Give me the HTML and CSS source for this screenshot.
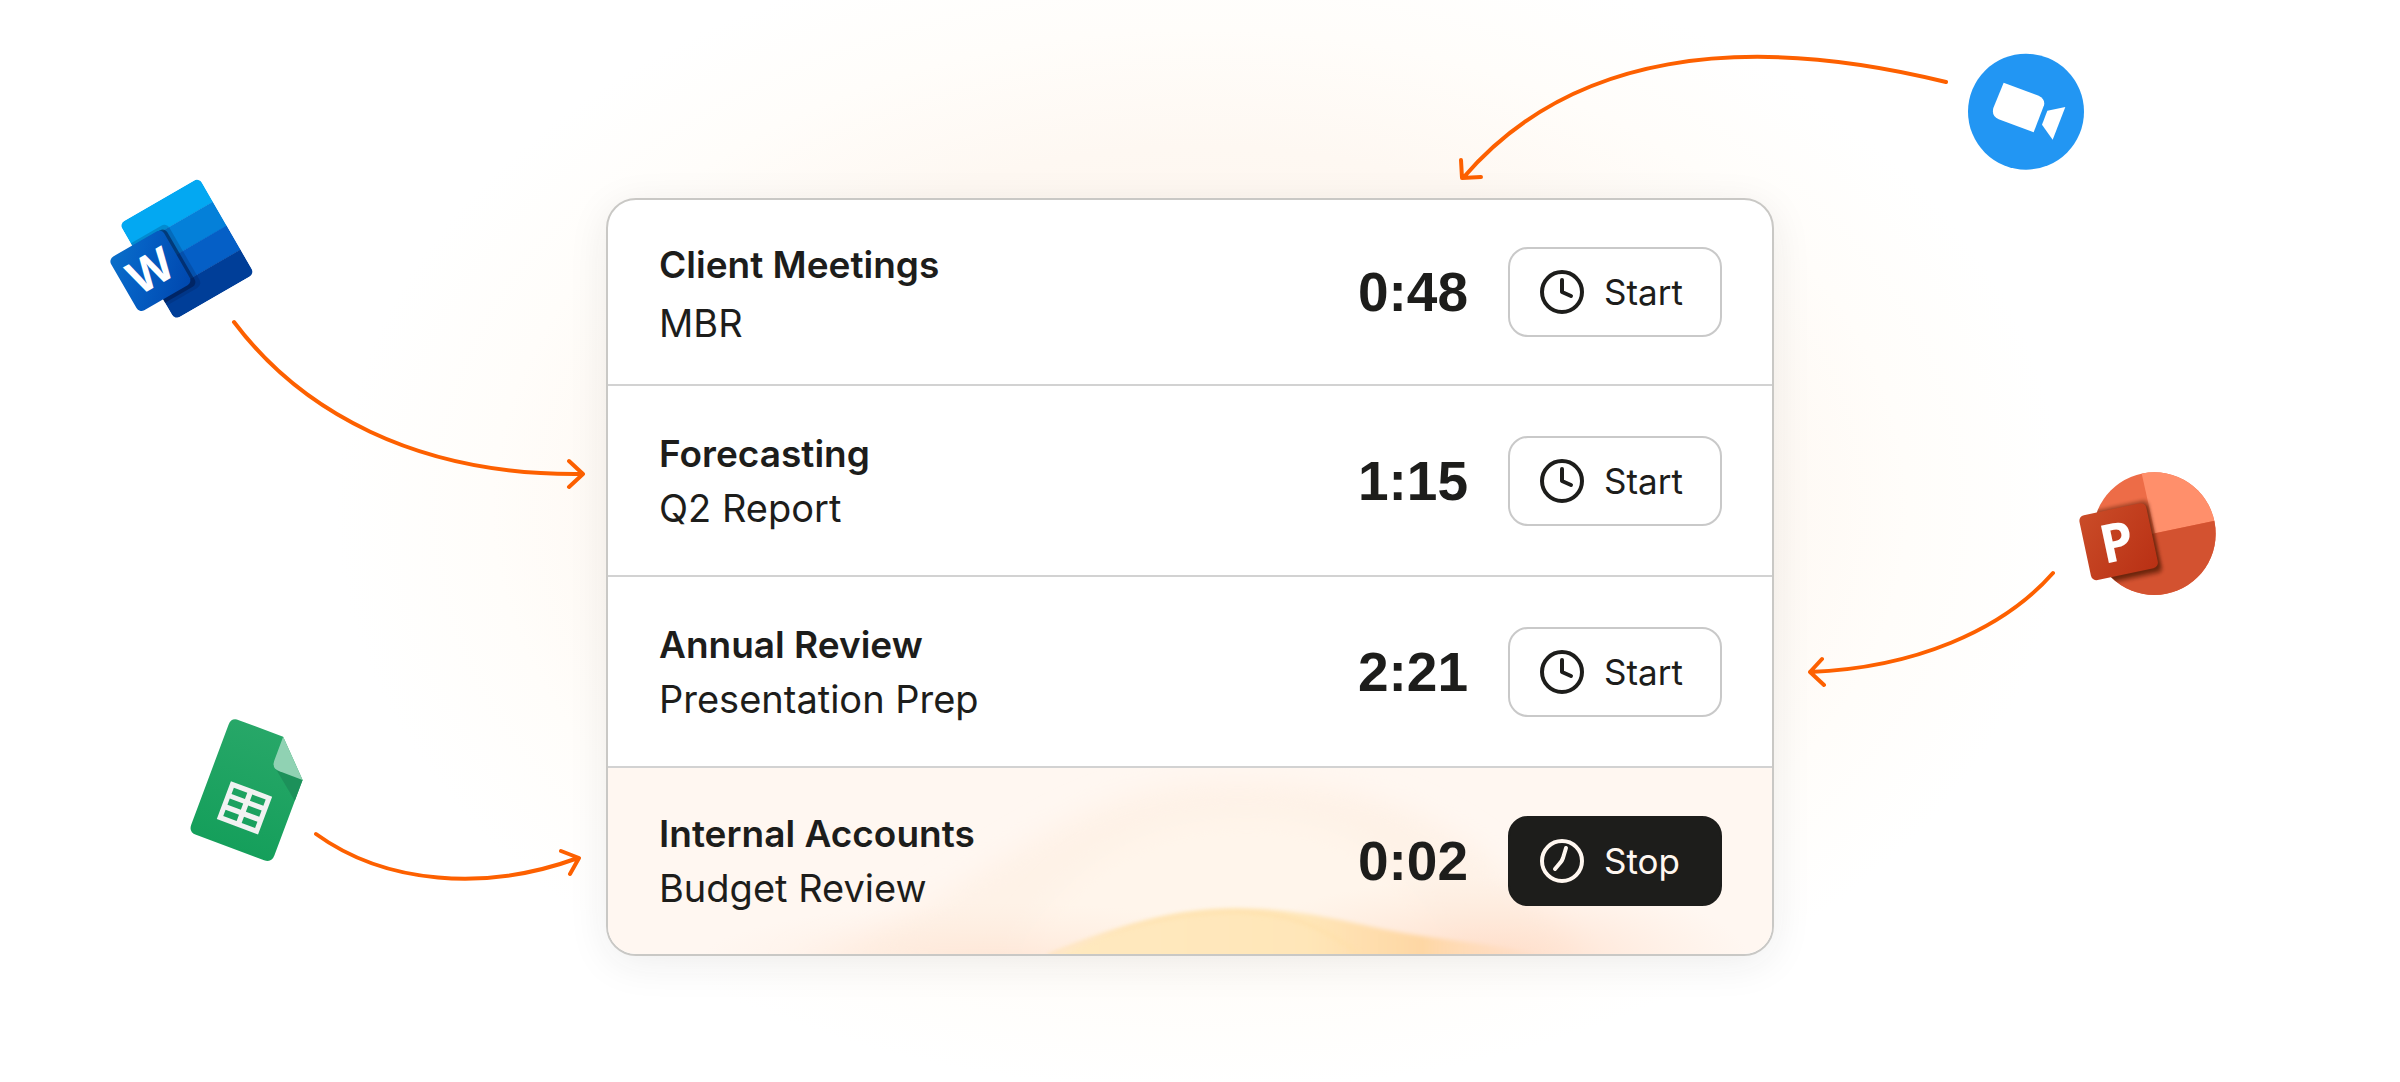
FILE: index.html
```html
<!DOCTYPE html>
<html lang="en">
<head>
<meta charset="utf-8">
<meta name="viewport" content="width=device-width, initial-scale=1">
<title>Time tracking</title>
<link rel="stylesheet" href="styles.css">
</head>
<body>
<main class="stage">
  <svg class="stage__art" viewBox="0 0 2400 1082" preserveAspectRatio="xMidYMin meet" aria-hidden="true">
    <defs>
      <linearGradient id="word-tile" x1="0" y1="0" x2="1" y2="1">
        <stop offset="0" stop-color="#0a6fc8"/><stop offset=".35" stop-color="#0560c4"/><stop offset="1" stop-color="#0047ae"/>
      </linearGradient>
      <linearGradient id="sheet-fill" x1="0" y1="0" x2="0" y2="1">
        <stop offset="0" stop-color="#27a768"/><stop offset="1" stop-color="#159f5b"/>
      </linearGradient>
      <linearGradient id="slide-tile" x1="0" y1="0" x2="1" y2="1">
        <stop offset="0" stop-color="#ca4c28"/><stop offset="1" stop-color="#b93014"/>
      </linearGradient>
      <clipPath id="word-clip"><rect width="276" height="333" rx="18"/></clipPath>
      <clipPath id="slide-clip"><circle cx="283" cy="221" r="184"/></clipPath>
      <filter id="soft" x="-20%" y="-20%" width="140%" height="140%"><feGaussianBlur stdDeviation="5"/></filter>
    </defs>

    <!-- word processor -->
    <svg x="90" y="160" width="200" height="180" viewBox="0 0 600 540">
      <g transform="translate(88 191) rotate(-30)">
        <g clip-path="url(#word-clip)">
          <rect width="276" height="84" fill="#03a8f2"/>
          <rect y="83" width="276" height="84" fill="#0480d9"/>
          <rect y="166" width="276" height="84" fill="#055fc6"/>
          <rect y="249" width="276" height="84" fill="#003e98"/>
          <rect x="-80" y="68" width="204" height="216" rx="18" fill="#00184a" opacity=".2"/>
          <rect x="-80" y="78" width="192" height="196" rx="16" fill="#001a4e" opacity=".6"/>
        </g>
        <rect x="-82" y="76" width="184" height="186" rx="17" fill="url(#word-tile)"/>
        <text class="glyph" x="10" y="218" font-size="138" text-anchor="middle">W</text>
      </g>
    </svg>

    <!-- spreadsheet -->
    <svg x="170" y="700" width="160" height="180" viewBox="0 0 480 540">
      <g transform="translate(184 52) rotate(20.5)">
        <path d="M24 0H166L266 101V343Q266 367 242 367H24Q0 367 0 343V24Q0 0 24 0Z" fill="url(#sheet-fill)"/>
        <path d="M174 94L266 101V168Z" fill="#1c915a"/>
        <path d="M166 0L266 101H192Q166 101 166 75Z" fill="#90d2b3"/>
        <path fill-rule="evenodd" fill="#f1f2f2" d="M66 180H198V301H66ZM81 195V215H124V195ZM140 195V215H183V195ZM81 230V250H124V230ZM140 230V250H183V230ZM81 266V286H124V266ZM140 266V286H183V266Z"/>
      </g>
    </svg>

    <!-- video call -->
    <svg x="1940" y="40" width="170" height="150" viewBox="0 0 510 450">
      <circle cx="258" cy="215" r="174" fill="#2296f3"/>
      <path d="M191 128L296 167Q316 176 312 196L281 277L176 238Q154 229 160 204Z" fill="#fff"/>
      <path d="M322 212L376 201L338 299L306 254Z" fill="#fff"/>
    </svg>

    <!-- presentation -->
    <svg x="2060" y="460" width="180" height="150" viewBox="0 0 540 450">
      <g clip-path="url(#slide-clip)">
        <rect width="540" height="450" fill="#ed6c47"/>
        <path d="M285 220L236 0H540V166Z" fill="#ff8f6b"/>
        <path d="M285 220L540 166V450H0V280Z" fill="#d35230"/>
        <g transform="translate(55 169) rotate(-12)" fill="#4a1405">
          <rect x="0" y="-8" width="216" height="228" rx="18" opacity=".32" filter="url(#soft)"/>
          <rect x="0" y="4" width="210" height="206" rx="16" opacity=".6" filter="url(#soft)"/>
        </g>
      </g>
      <g transform="translate(55 169) rotate(-12)">
        <rect width="205" height="199" rx="17" fill="url(#slide-tile)"/>
        <text class="glyph" x="46" y="156" font-size="160">P</text>
      </g>
    </svg>

    <g class="arrow">
      <path d="M234 322C300 410 415 476 582 474M569 461L583 474L569 487"/>
      <path d="M316 834C385 884 485 892 578 858M561 851L579 858L570 874"/>
      <path d="M1946 82C1742 32 1570 53 1463 178M1461 160L1462 178L1481 177"/>
      <path d="M2053 573C2002 631 1913 668 1810 672M1822 659L1810 672L1824 685"/>
    </g>
  </svg>

  <section class="card" aria-label="Timers">
    <article class="row row--first">
      <div class="row__text">
        <h2 class="row__title">Client Meetings</h2>
        <p class="row__detail">MBR</p>
      </div>
      <time class="row__time">0:48</time>
      <button class="btn" type="button">
        <svg class="btn__icon" viewBox="0 0 44 44" aria-hidden="true"><circle cx="22" cy="22" r="20"/><path d="M22 10V22L31 26"/></svg>
        Start
      </button>
    </article>
    <article class="row">
      <div class="row__text">
        <h2 class="row__title">Forecasting</h2>
        <p class="row__detail">Q2 Report</p>
      </div>
      <time class="row__time">1:15</time>
      <button class="btn" type="button">
        <svg class="btn__icon" viewBox="0 0 44 44" aria-hidden="true"><circle cx="22" cy="22" r="20"/><path d="M22 10V22L31 26"/></svg>
        Start
      </button>
    </article>
    <article class="row">
      <div class="row__text">
        <h2 class="row__title">Annual Review</h2>
        <p class="row__detail">Presentation Prep</p>
      </div>
      <time class="row__time">2:21</time>
      <button class="btn" type="button">
        <svg class="btn__icon" viewBox="0 0 44 44" aria-hidden="true"><circle cx="22" cy="22" r="20"/><path d="M22 10V22L31 26"/></svg>
        Start
      </button>
    </article>
    <article class="row row--active">
      <svg class="row__art" viewBox="0 0 1163 188" preserveAspectRatio="none" aria-hidden="true">
        <defs>
          <linearGradient id="hill" x1="0" x2="1" y1="0" y2="0">
            <stop offset="0" stop-color="#ffe9c0"/><stop offset=".5" stop-color="#ffe6b8"/><stop offset=".72" stop-color="#fed7a4"/><stop offset="1" stop-color="#ffdcc4" stop-opacity="0"/>
          </linearGradient>
          <radialGradient id="blush"><stop offset="0" stop-color="#ffd9c2"/><stop offset="1" stop-color="#ffe4d4" stop-opacity="0"/></radialGradient>
          <filter id="haze" x="-10%" y="-20%" width="120%" height="140%"><feGaussianBlur stdDeviation="14"/></filter>
          <filter id="edge" x="-10%" y="-20%" width="120%" height="140%"><feGaussianBlur stdDeviation="2"/></filter>
        </defs>
        <path d="M180 200C360 150 440 10 630 14C780 14 880 60 980 200Z" fill="#fef2e7" filter="url(#haze)"/>
        <path d="M400 200C460 90 540 50 640 50C730 50 800 90 850 200Z" fill="#fff5eb" filter="url(#haze)"/>
        <ellipse cx="390" cy="196" rx="300" ry="60" fill="url(#blush)" opacity=".5"/>
        <ellipse cx="880" cy="194" rx="260" ry="84" fill="url(#blush)" opacity=".9"/>
        <path d="M435 196C510 160 560 142 630 142C710 142 760 164 830 172C890 180 930 186 960 196Z" fill="url(#hill)" filter="url(#edge)"/>
        <path d="M440 190C515 158 565 146 625 145C680 146 715 160 750 188" fill="none" stroke="#ffe0a8" stroke-width="4" opacity=".6" filter="url(#edge)"/>
      </svg>
      <div class="row__text">
        <h2 class="row__title">Internal Accounts</h2>
        <p class="row__detail">Budget Review</p>
      </div>
      <time class="row__time">0:02</time>
      <button class="btn btn--stop" type="button">
        <svg class="btn__icon" viewBox="0 0 44 44" aria-hidden="true"><circle cx="22" cy="22" r="20"/><path d="M26 9L23 19Q22 22 20 24L15 30"/></svg>
        Stop
      </button>
    </article>
  </section>
</main>
</body>
</html>
```
FILE: styles.css
```css
* {
  box-sizing: border-box;
}

body {
  margin: 0;
  background: #fff;
  color: #1d1d1b;
  font-family: Inter, "Liberation Sans", sans-serif;
}

.stage {
  position: relative;
  display: grid;
  grid-template-columns: 606fr 1168fr 626fr;
  align-items: start;
  min-height: 100vh;
  padding: 198px 0 126px;
  overflow: hidden;
  background:
    radial-gradient(ellipse 36% 54% at 50% 47%, #fef3e9 0%, #fef8f2 62%, #fffdfa 82%, #ffffff 100%);
}

.stage__art {
  position: absolute;
  inset: 0;
  width: 100%;
  height: auto;
}

.glyph {
  fill: #fff;
  font-family: "Open Sans", sans-serif;
  font-weight: 700;
}

.arrow {
  fill: none;
  stroke: #fd6000;
  stroke-width: 4;
  stroke-linecap: round;
  stroke-linejoin: round;
}

.card {
  position: relative;
  grid-column: 2;
  overflow: hidden;
  border: 2px solid #c9c8c5;
  border-radius: 30px;
  background: #fff;
  box-shadow: 0 8px 40px rgba(40, 40, 40, 0.08);
}

.row {
  position: relative;
  display: flex;
  align-items: center;
  min-height: 191px;
  padding: 0 50px 0 51px;
  border-bottom: 2px solid #d2d2d2;
}

.row--first,
.row--active {
  min-height: 186px;
}

.row--active {
  border-bottom: 0;
  background: #fff7f1;
}

.row__art {
  position: absolute;
  inset: 0;
  width: 100%;
  height: 100%;
}

.row__text {
  position: relative;
  flex: 1;
}

.row__title,
.row__detail {
  margin: 0;
  line-height: 54px;
}

.row__title {
  font-size: 37px;
  font-weight: 600;
}

.row__detail {
  font-size: 38px;
  font-weight: 400;
}

.row--first .row__text {
  padding-top: 4px;
}

.row--first .row__detail {
  padding-top: 4px;
}

.row__time {
  position: relative;
  margin-right: 40px;
  font-family: "Liberation Sans", Arial, sans-serif;
  font-size: 55px;
  font-weight: 700;
  line-height: 60px;
}

.btn {
  position: relative;
  display: flex;
  align-items: center;
  gap: 20px;
  width: 214px;
  height: 90px;
  padding: 0 0 0 30px;
  border: 2px solid #c9c9c9;
  border-radius: 20px;
  background: #fff;
  color: #1d1d1b;
  font: 400 35px/44px Inter, "Liberation Sans", sans-serif;
  cursor: pointer;
}

.btn--stop {
  border-color: #1d1d1b;
  background: #1d1d1b;
  color: #fff7f0;
}

.btn__icon {
  flex: none;
  width: 44px;
  height: 44px;
  fill: none;
  stroke: currentColor;
  stroke-width: 4;
  stroke-linecap: round;
  stroke-linejoin: round;
}
```
